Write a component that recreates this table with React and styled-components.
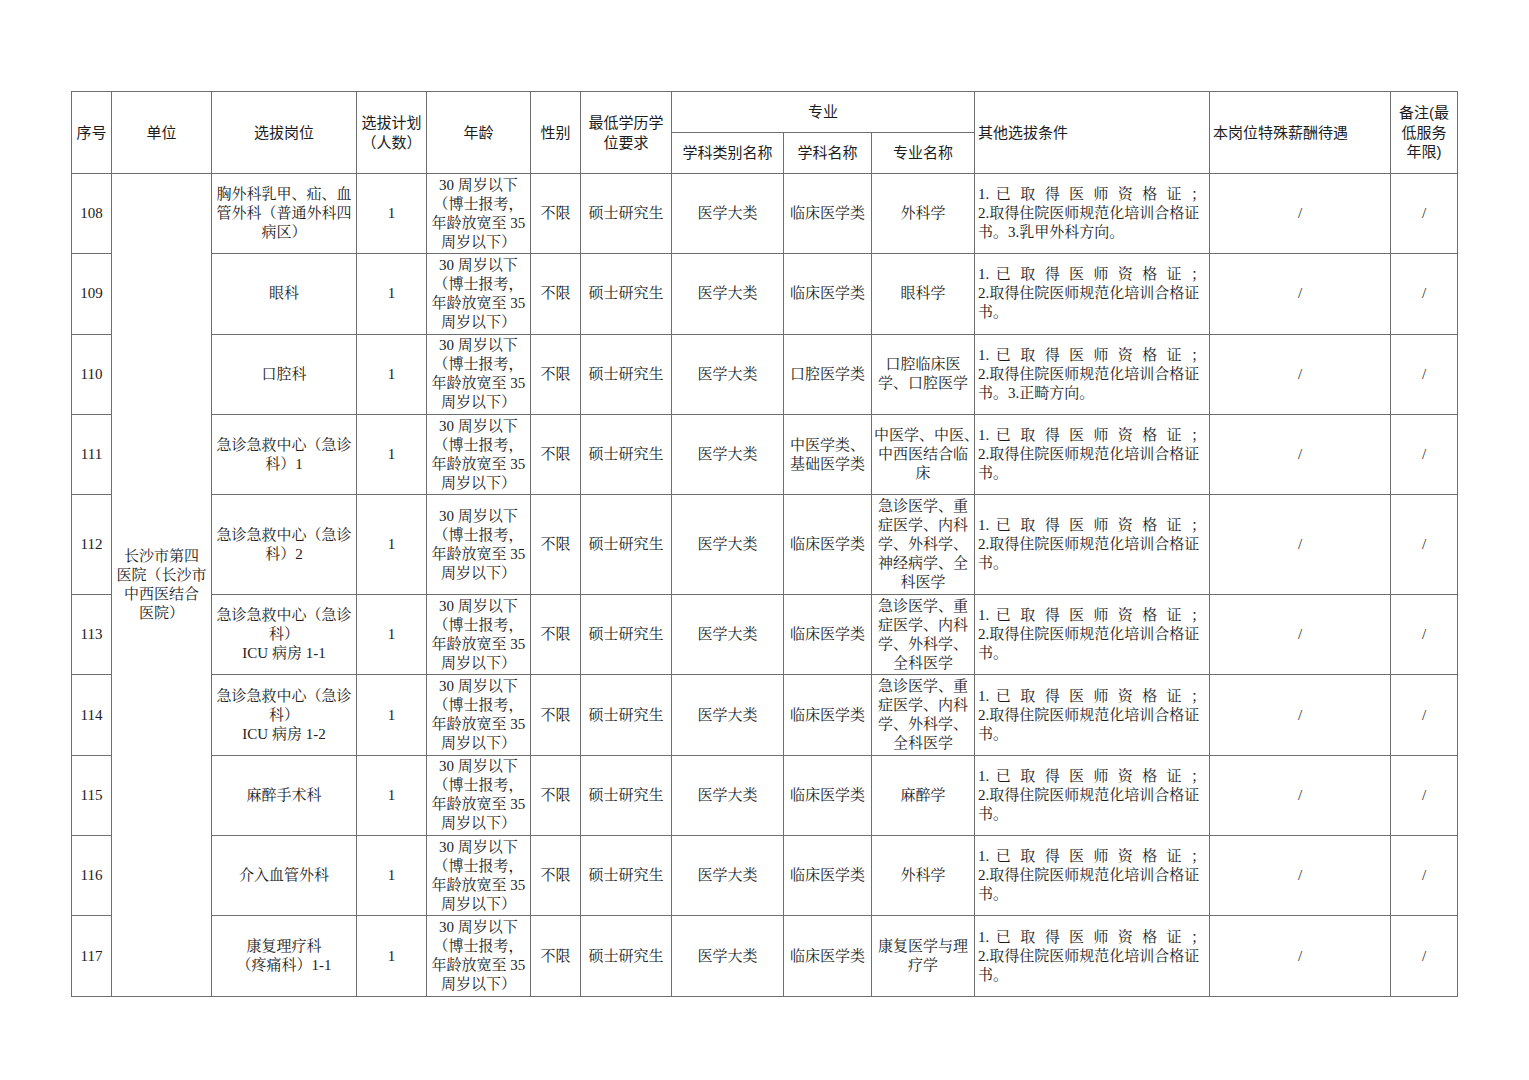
import React from "react";
import styled, { createGlobalStyle } from "styled-components";

const GlobalStyle = createGlobalStyle`
  html, body {
    margin: 0;
    padding: 0;
    background: #ffffff;
  }
`;

const SERIF = `"Liberation Serif", "Noto Serif CJK SC", "Noto Sans CJK SC", serif`;
const SANS = `"Liberation Sans", "Noto Sans CJK SC", sans-serif`;

const COLS = [40, 100, 145, 70, 104, 50, 91, 112, 88, 103, 235, 181, 67];

const Page = styled.div`
  padding: 91px 0 0 71px;
  width: 1529px;
  height: 1080px;
  box-sizing: border-box;
`;

const Sheet = styled.table`
  border-collapse: collapse;
  table-layout: fixed;
  width: 1386px;
  color: #1c1c1c;
`;

const HeadCell = styled.th`
  border: 1px solid #6e6e6e;
  font-family: ${SANS};
  font-weight: normal;
  font-size: 15px;
  line-height: 19.5px;
  height: ${(p) => p.$h || 40}px;
  padding: 0 3px;
  text-align: ${(p) => p.$align || "center"};
  vertical-align: middle;
  box-sizing: border-box;
`;

const Cell = styled.td`
  border: 1px solid #6e6e6e;
  font-family: ${SERIF};
  font-size: 15px;
  line-height: 19px;
  height: ${(p) => p.$h || 80}px;
  padding: 0 ${(p) => p.$pad ?? 2}px;
  text-align: ${(p) => p.$align || "center"};
  vertical-align: middle;
  box-sizing: border-box;
  white-space: nowrap;
`;

const Line = styled.div`
  display: block;
`;

const SpreadLine = styled.div`
  display: block;
  text-align: justify;
  text-align-last: justify;
`;

const AGE = ["30 周岁以下", "（博士报考，", "年龄放宽至 35", "周岁以下）"];
const COND_HEAD = "1. 已 取 得 医 师 资 格 证 ；";
const COND_MAIN = "2.取得住院医师规范化培训合格证";

const ROWS = [
  {
    no: "108",
    post: ["胸外科乳甲、疝、血", "管外科（普通外科四", "病区）"],
    subject: ["临床医学类"],
    major: ["外科学"],
    tail: "书。3.乳甲外科方向。",
  },
  { no: "109", post: ["眼科"], subject: ["临床医学类"], major: ["眼科学"], tail: "书。" },
  {
    no: "110",
    post: ["口腔科"],
    subject: ["口腔医学类"],
    major: ["口腔临床医", "学、口腔医学"],
    tail: "书。3.正畸方向。",
  },
  {
    no: "111",
    post: ["急诊急救中心（急诊", "科）1"],
    subject: ["中医学类、", "基础医学类"],
    major: ["中医学、中医、", "中西医结合临", "床"],
    tail: "书。",
  },
  {
    no: "112",
    h: 100,
    post: ["急诊急救中心（急诊", "科）2"],
    subject: ["临床医学类"],
    major: ["急诊医学、重", "症医学、内科", "学、外科学、", "神经病学、全", "科医学"],
    tail: "书。",
  },
  {
    no: "113",
    post: ["急诊急救中心（急诊", "科）", "ICU 病房 1-1"],
    subject: ["临床医学类"],
    major: ["急诊医学、重", "症医学、内科", "学、外科学、", "全科医学"],
    tail: "书。",
  },
  {
    no: "114",
    post: ["急诊急救中心（急诊", "科）", "ICU 病房 1-2"],
    subject: ["临床医学类"],
    major: ["急诊医学、重", "症医学、内科", "学、外科学、", "全科医学"],
    tail: "书。",
  },
  { no: "115", post: ["麻醉手术科"], subject: ["临床医学类"], major: ["麻醉学"], tail: "书。" },
  { no: "116", post: ["介入血管外科"], subject: ["临床医学类"], major: ["外科学"], tail: "书。" },
  {
    no: "117",
    post: ["康复理疗科", "（疼痛科）1-1"],
    subject: ["临床医学类"],
    major: ["康复医学与理", "疗学"],
    tail: "书。",
  },
];

const UNIT = ["长沙市第四", "医院（长沙市", "中西医结合", "医院）"];

const Lines = ({ items }) => items.map((t, i) => <Line key={i}>{t}</Line>);

const App = () => {
  return (
    <Page>
      <GlobalStyle />
      <Sheet>
        <colgroup>
          {COLS.map((w, i) => (
            <col key={i} style={{ width: w }} />
          ))}
        </colgroup>
        <thead>
          <tr>
            <HeadCell rowSpan={2}>序号</HeadCell>
            <HeadCell rowSpan={2}>单位</HeadCell>
            <HeadCell rowSpan={2}>选拔岗位</HeadCell>
            <HeadCell rowSpan={2}>
              <Lines items={["选拔计划", "（人数）"]} />
            </HeadCell>
            <HeadCell rowSpan={2}>年龄</HeadCell>
            <HeadCell rowSpan={2}>性别</HeadCell>
            <HeadCell rowSpan={2}>
              <Lines items={["最低学历学", "位要求"]} />
            </HeadCell>
            <HeadCell colSpan={3} $h={41}>
              专业
            </HeadCell>
            <HeadCell rowSpan={2} $align="left">
              其他选拔条件
            </HeadCell>
            <HeadCell rowSpan={2} $align="left">
              本岗位特殊薪酬待遇
            </HeadCell>
            <HeadCell rowSpan={2}>
              <Lines items={["备注(最", "低服务", "年限)"]} />
            </HeadCell>
          </tr>
          <tr>
            <HeadCell $h={41}>学科类别名称</HeadCell>
            <HeadCell $h={41}>学科名称</HeadCell>
            <HeadCell $h={41}>专业名称</HeadCell>
          </tr>
        </thead>
        <tbody>
          {ROWS.map((row, idx) => (
            <tr key={row.no}>
              <Cell $h={row.h || 80.3}>{row.no}</Cell>
              {idx === 0 && (
                <Cell rowSpan={ROWS.length}>
                  <Lines items={UNIT} />
                </Cell>
              )}
              <Cell>
                <Lines items={row.post} />
              </Cell>
              <Cell>1</Cell>
              <Cell>
                <Lines items={AGE} />
              </Cell>
              <Cell>不限</Cell>
              <Cell>硕士研究生</Cell>
              <Cell>医学大类</Cell>
              <Cell>
                <Lines items={row.subject} />
              </Cell>
              <Cell>
                <Lines items={row.major} />
              </Cell>
              <Cell $align="left" $pad={3}>
                <SpreadLine>{COND_HEAD}</SpreadLine>
                <Line>{COND_MAIN}</Line>
                <Line>{row.tail}</Line>
              </Cell>
              <Cell>/</Cell>
              <Cell>/</Cell>
            </tr>
          ))}
        </tbody>
      </Sheet>
    </Page>
  );
};

export default App;
